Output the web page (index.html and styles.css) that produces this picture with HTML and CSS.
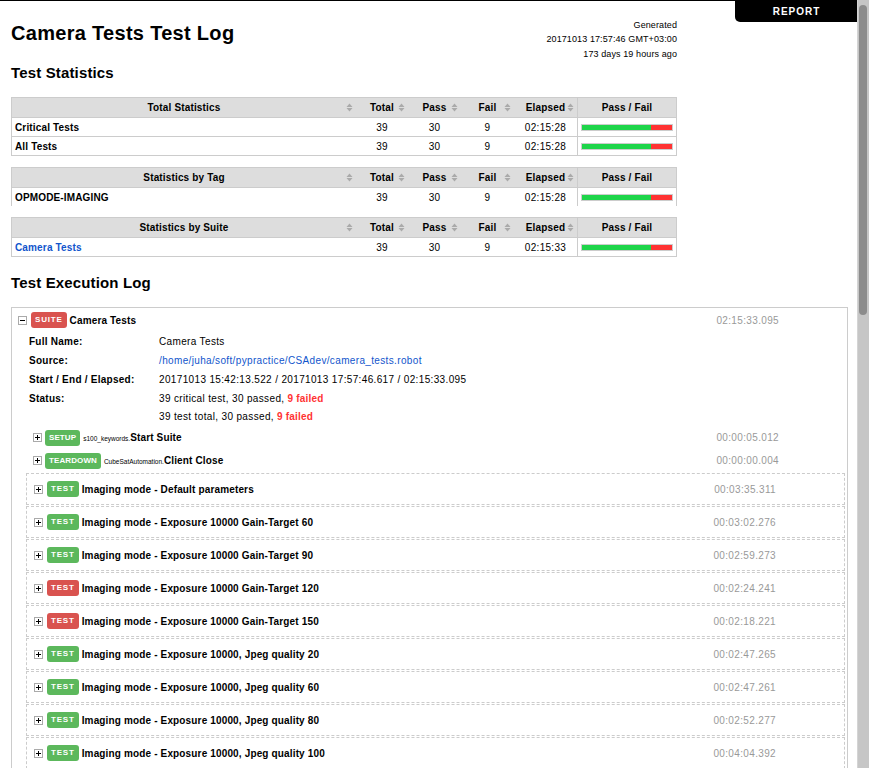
FILE: index.html
```html
<!DOCTYPE html>
<html lang="en">
<head>
<meta charset="utf-8">
<title>Camera Tests Test Log</title>
<link rel="stylesheet" href="styles.css">
</head>
<body>
<a class="report-link" href="#">REPORT</a>
<div class="scrollbar"><div class="thumb"></div></div>

<div class="header">
  <h1>Camera Tests Test Log</h1>
  <div class="generated">Generated<br>20171013 17:57:46 GMT+03:00<br>173 days 19 hours ago</div>
</div>

<h2>Test Statistics</h2>

<table class="stats">
  <colgroup><col class="c-name"><col class="c-total"><col class="c-pass"><col class="c-fail"><col class="c-elapsed"><col class="c-graph"></colgroup>
  <thead>
    <tr>
      <th>Total Statistics<svg class="sort" width="7" height="9" viewBox="0 0 7 9"><path d="M0.5 4L3.5 0.5L6.5 4Z M0.5 5L3.5 8.5L6.5 5Z"/></svg></th>
      <th>Total<svg class="sort" width="7" height="9" viewBox="0 0 7 9"><path d="M0.5 4L3.5 0.5L6.5 4Z M0.5 5L3.5 8.5L6.5 5Z"/></svg></th>
      <th>Pass<svg class="sort" width="7" height="9" viewBox="0 0 7 9"><path d="M0.5 4L3.5 0.5L6.5 4Z M0.5 5L3.5 8.5L6.5 5Z"/></svg></th>
      <th>Fail<svg class="sort" width="7" height="9" viewBox="0 0 7 9"><path d="M0.5 4L3.5 0.5L6.5 4Z M0.5 5L3.5 8.5L6.5 5Z"/></svg></th>
      <th>Elapsed<svg class="sort" width="7" height="9" viewBox="0 0 7 9"><path d="M0.5 4L3.5 0.5L6.5 4Z M0.5 5L3.5 8.5L6.5 5Z"/></svg></th>
      <th class="graph-col">Pass / Fail</th>
    </tr>
  </thead>
  <tbody>
    <tr>
      <td class="name">Critical Tests</td><td>39</td><td>30</td><td>9</td><td>02:15:28</td>
      <td class="graph-col"><div class="graph"><div class="pass-bar" style="width:76.92%"></div><div class="fail-bar" style="width:23.08%"></div></div></td>
    </tr>
    <tr>
      <td class="name">All Tests</td><td>39</td><td>30</td><td>9</td><td>02:15:28</td>
      <td class="graph-col"><div class="graph"><div class="pass-bar" style="width:76.92%"></div><div class="fail-bar" style="width:23.08%"></div></div></td>
    </tr>
  </tbody>
</table>

<table class="stats no-bottom">
  <colgroup><col class="c-name"><col class="c-total"><col class="c-pass"><col class="c-fail"><col class="c-elapsed"><col class="c-graph"></colgroup>
  <thead>
    <tr>
      <th>Statistics by Tag<svg class="sort" width="7" height="9" viewBox="0 0 7 9"><path d="M0.5 4L3.5 0.5L6.5 4Z M0.5 5L3.5 8.5L6.5 5Z"/></svg></th>
      <th>Total<svg class="sort" width="7" height="9" viewBox="0 0 7 9"><path d="M0.5 4L3.5 0.5L6.5 4Z M0.5 5L3.5 8.5L6.5 5Z"/></svg></th>
      <th>Pass<svg class="sort" width="7" height="9" viewBox="0 0 7 9"><path d="M0.5 4L3.5 0.5L6.5 4Z M0.5 5L3.5 8.5L6.5 5Z"/></svg></th>
      <th>Fail<svg class="sort" width="7" height="9" viewBox="0 0 7 9"><path d="M0.5 4L3.5 0.5L6.5 4Z M0.5 5L3.5 8.5L6.5 5Z"/></svg></th>
      <th>Elapsed<svg class="sort" width="7" height="9" viewBox="0 0 7 9"><path d="M0.5 4L3.5 0.5L6.5 4Z M0.5 5L3.5 8.5L6.5 5Z"/></svg></th>
      <th class="graph-col">Pass / Fail</th>
    </tr>
  </thead>
  <tbody>
    <tr>
      <td class="name">OPMODE-IMAGING</td><td>39</td><td>30</td><td>9</td><td>02:15:28</td>
      <td class="graph-col"><div class="graph"><div class="pass-bar" style="width:76.92%"></div><div class="fail-bar" style="width:23.08%"></div></div></td>
    </tr>
  </tbody>
</table>

<table class="stats">
  <colgroup><col class="c-name"><col class="c-total"><col class="c-pass"><col class="c-fail"><col class="c-elapsed"><col class="c-graph"></colgroup>
  <thead>
    <tr>
      <th>Statistics by Suite<svg class="sort" width="7" height="9" viewBox="0 0 7 9"><path d="M0.5 4L3.5 0.5L6.5 4Z M0.5 5L3.5 8.5L6.5 5Z"/></svg></th>
      <th>Total<svg class="sort" width="7" height="9" viewBox="0 0 7 9"><path d="M0.5 4L3.5 0.5L6.5 4Z M0.5 5L3.5 8.5L6.5 5Z"/></svg></th>
      <th>Pass<svg class="sort" width="7" height="9" viewBox="0 0 7 9"><path d="M0.5 4L3.5 0.5L6.5 4Z M0.5 5L3.5 8.5L6.5 5Z"/></svg></th>
      <th>Fail<svg class="sort" width="7" height="9" viewBox="0 0 7 9"><path d="M0.5 4L3.5 0.5L6.5 4Z M0.5 5L3.5 8.5L6.5 5Z"/></svg></th>
      <th>Elapsed<svg class="sort" width="7" height="9" viewBox="0 0 7 9"><path d="M0.5 4L3.5 0.5L6.5 4Z M0.5 5L3.5 8.5L6.5 5Z"/></svg></th>
      <th class="graph-col">Pass / Fail</th>
    </tr>
  </thead>
  <tbody>
    <tr>
      <td class="name"><a href="#">Camera Tests</a></td><td>39</td><td>30</td><td>9</td><td>02:15:33</td>
      <td class="graph-col"><div class="graph"><div class="pass-bar" style="width:76.92%"></div><div class="fail-bar" style="width:23.08%"></div></div></td>
    </tr>
  </tbody>
</table>

<h2 class="log-title">Test Execution Log</h2>

<div class="suite">
  <div class="el-header suite-header">
    <svg class="toggle" width="9" height="9" viewBox="0 0 9 9"><rect x="0.5" y="0.5" width="8" height="8"/><path d="M2 4.5H7"/></svg>
    <span class="label fail">SUITE</span>
    <span class="el-name">Camera Tests</span>
    <span class="elapsed">02:15:33.095</span>
  </div>
  <table class="metadata">
    <tr><th>Full Name:</th><td>Camera Tests</td></tr>
    <tr><th>Source:</th><td><a href="#">/home/juha/soft/pypractice/CSAdev/camera_tests.robot</a></td></tr>
    <tr><th>Start / End / Elapsed:</th><td>20171013 15:42:13.522 / 20171013 17:57:46.617 / 02:15:33.095</td></tr>
    <tr><th>Status:</th><td><div>39 critical test, 30 passed, <b class="failed">9 failed</b></div><div class="second">39 test total, 30 passed, <b class="failed">9 failed</b></div></td></tr>
  </table>

  <div class="children">
    <div class="el-header kw-header">
      <svg class="toggle" width="9" height="9" viewBox="0 0 9 9"><rect x="0.5" y="0.5" width="8" height="8"/><path d="M2 4.5H7M4.5 2V7"/></svg>
      <span class="label pass kw">SETUP</span>
      <span class="el-name"><span class="lib">s100_keywords.</span>Start Suite</span>
      <span class="elapsed">00:00:05.012</span>
    </div>
    <div class="el-header kw-header">
      <svg class="toggle" width="9" height="9" viewBox="0 0 9 9"><rect x="0.5" y="0.5" width="8" height="8"/><path d="M2 4.5H7M4.5 2V7"/></svg>
      <span class="label pass kw">TEARDOWN</span>
      <span class="el-name"><span class="lib">CubeSatAutomation.</span>Client Close</span>
      <span class="elapsed">00:00:00.004</span>
    </div>

    <div class="test"><div class="el-header test-header">
      <svg class="toggle" width="9" height="9" viewBox="0 0 9 9"><rect x="0.5" y="0.5" width="8" height="8"/><path d="M2 4.5H7M4.5 2V7"/></svg>
      <span class="label pass">TEST</span>
      <span class="el-name">Imaging mode - Default parameters</span>
      <span class="elapsed">00:03:35.311</span>
    </div></div>
    <div class="test"><div class="el-header test-header">
      <svg class="toggle" width="9" height="9" viewBox="0 0 9 9"><rect x="0.5" y="0.5" width="8" height="8"/><path d="M2 4.5H7M4.5 2V7"/></svg>
      <span class="label pass">TEST</span>
      <span class="el-name">Imaging mode - Exposure 10000 Gain-Target 60</span>
      <span class="elapsed">00:03:02.276</span>
    </div></div>
    <div class="test"><div class="el-header test-header">
      <svg class="toggle" width="9" height="9" viewBox="0 0 9 9"><rect x="0.5" y="0.5" width="8" height="8"/><path d="M2 4.5H7M4.5 2V7"/></svg>
      <span class="label pass">TEST</span>
      <span class="el-name">Imaging mode - Exposure 10000 Gain-Target 90</span>
      <span class="elapsed">00:02:59.273</span>
    </div></div>
    <div class="test"><div class="el-header test-header">
      <svg class="toggle" width="9" height="9" viewBox="0 0 9 9"><rect x="0.5" y="0.5" width="8" height="8"/><path d="M2 4.5H7M4.5 2V7"/></svg>
      <span class="label fail">TEST</span>
      <span class="el-name">Imaging mode - Exposure 10000 Gain-Target 120</span>
      <span class="elapsed">00:02:24.241</span>
    </div></div>
    <div class="test"><div class="el-header test-header">
      <svg class="toggle" width="9" height="9" viewBox="0 0 9 9"><rect x="0.5" y="0.5" width="8" height="8"/><path d="M2 4.5H7M4.5 2V7"/></svg>
      <span class="label fail">TEST</span>
      <span class="el-name">Imaging mode - Exposure 10000 Gain-Target 150</span>
      <span class="elapsed">00:02:18.221</span>
    </div></div>
    <div class="test"><div class="el-header test-header">
      <svg class="toggle" width="9" height="9" viewBox="0 0 9 9"><rect x="0.5" y="0.5" width="8" height="8"/><path d="M2 4.5H7M4.5 2V7"/></svg>
      <span class="label pass">TEST</span>
      <span class="el-name">Imaging mode - Exposure 10000, Jpeg quality 20</span>
      <span class="elapsed">00:02:47.265</span>
    </div></div>
    <div class="test"><div class="el-header test-header">
      <svg class="toggle" width="9" height="9" viewBox="0 0 9 9"><rect x="0.5" y="0.5" width="8" height="8"/><path d="M2 4.5H7M4.5 2V7"/></svg>
      <span class="label pass">TEST</span>
      <span class="el-name">Imaging mode - Exposure 10000, Jpeg quality 60</span>
      <span class="elapsed">00:02:47.261</span>
    </div></div>
    <div class="test"><div class="el-header test-header">
      <svg class="toggle" width="9" height="9" viewBox="0 0 9 9"><rect x="0.5" y="0.5" width="8" height="8"/><path d="M2 4.5H7M4.5 2V7"/></svg>
      <span class="label pass">TEST</span>
      <span class="el-name">Imaging mode - Exposure 10000, Jpeg quality 80</span>
      <span class="elapsed">00:02:52.277</span>
    </div></div>
    <div class="test"><div class="el-header test-header">
      <svg class="toggle" width="9" height="9" viewBox="0 0 9 9"><rect x="0.5" y="0.5" width="8" height="8"/><path d="M2 4.5H7M4.5 2V7"/></svg>
      <span class="label pass">TEST</span>
      <span class="el-name">Imaging mode - Exposure 10000, Jpeg quality 100</span>
      <span class="elapsed">00:04:04.392</span>
    </div></div>
  </div>
</div>
</body>
</html>
```

FILE: styles.css
```css
* {
  box-sizing: border-box;
}

body {
  margin: 0;
  padding: 0 21px 0 11px;
  border-top: 1px solid #000;
  font-family: "Liberation Sans", Arial, sans-serif;
  font-size: 10px;
  letter-spacing: 0.15px;
  color: #000;
  background: #fff;
}

a {
  color: #15c;
  text-decoration: none;
}

/* page scrollbar (browser chrome drawn over the right edge) */
.scrollbar {
  position: fixed;
  top: 0;
  right: 0;
  bottom: 0;
  width: 12px;
  background: #c6c6c6;
  border-left: 1px solid #d4d4d4;
  z-index: 20;
}
.thumb {
  margin: 5px 2px 0 1px;
  height: 310px;
  background: #8c8c8c;
  border-radius: 4px;
}

.report-link {
  position: fixed;
  top: 0;
  right: 12px;
  z-index: 10;
  width: 122px;
  padding: 6px 0 4px 1px;
  line-height: 12px;
  background: #000;
  color: #fff;
  font-weight: bold;
  letter-spacing: 1px;
  text-align: center;
  border-bottom-left-radius: 5px;
}

.header {
  display: flex;
  justify-content: space-between;
  align-items: flex-start;
  width: 666px;
  height: 47px;
  padding-top: 17px;
}

h1 {
  margin: 4px 0 0;
  font-size: 20px;
  line-height: 23px;
  font-weight: bold;
  letter-spacing: 0.3px;
}

.generated {
  font-size: 9px;
  line-height: 14.4px;
  letter-spacing: 0.1px;
  text-align: right;
  white-space: nowrap;
}

h2 {
  margin: 16px 0 16px;
  font-size: 15px;
  line-height: 17px;
  font-weight: bold;
}

h2.log-title {
  margin: 17px 0 16px;
}

/* statistics tables */
.stats {
  width: 666px;
  table-layout: fixed;
  border-collapse: separate;
  border-spacing: 0;
  border: 1px solid #ccc;
  margin-bottom: 11px;
}
.stats.no-bottom {
  border-bottom: none;
}
.c-name { width: 344px; }
.c-total { width: 52px; }
.c-pass { width: 53px; }
.c-fail { width: 53px; }
.c-elapsed { width: 63px; }
.c-graph { width: 99px; }

.stats th {
  position: relative;
  box-sizing: content-box;
  height: 19px;
  padding: 0;
  background: #ddd;
  font-weight: bold;
  text-align: center;
  white-space: nowrap;
}
.stats td {
  box-sizing: content-box;
  height: 18px;
  padding: 0;
  text-align: center;
  border-top: 1px solid #ccc;
  white-space: nowrap;
  letter-spacing: 0.3px;
}
.stats td.name {
  text-align: left;
  padding-left: 3px;
  font-weight: bold;
  letter-spacing: 0.15px;
}
.stats .graph-col {
  border-left: 1px solid #ccc;
}
.sort {
  position: absolute;
  right: 3px;
  top: 5px;
  fill: #aaa;
}

.graph {
  display: flex;
  width: 92px;
  height: 7px;
  margin-left: 3px;
  border: 1px solid #ccc;
}
.pass-bar {
  background: #1ed54a;
}
.fail-bar {
  background: #f33;
}

/* execution log */
.suite {
  border: 1px solid #ccc;
  padding: 0 2px 0 0;
}

.el-header {
  display: flex;
  align-items: center;
  white-space: nowrap;
}
.suite-header {
  height: 24px;
  padding: 0 66px 0 6px;
}
.kw-header {
  height: 23px;
  padding: 0 66px 0 7px;
}
.test {
  margin-top: 1px;
  border: 1px dashed #ccc;
}
.test-header {
  height: 30px;
  padding: 0 68px 0 7px;
}

.toggle {
  flex: none;
}
.toggle rect {
  fill: #fff;
  stroke: #aaa;
}
.toggle path {
  stroke: #000;
  stroke-width: 1;
}

.label {
  display: inline-block;
  padding: 2px 4px;
  line-height: 12px;
  font-size: 8px;
  font-weight: bold;
  letter-spacing: 0.8px;
  color: #fff;
  border-radius: 3px;
}
.label.pass {
  background: #5cb85c;
}
.label.fail {
  background: #d9534f;
}
.label.kw {
  letter-spacing: 0.1px;
}
.suite-header .label {
  margin-left: 4px;
}
.kw-header .label {
  margin-left: 3px;
}
.test-header .label {
  margin-left: 4px;
}

.el-name {
  margin-left: 3px;
  font-weight: bold;
}
.lib {
  font-size: 6.5px;
  font-weight: normal;
  letter-spacing: 0;
}
.elapsed {
  margin-left: auto;
  color: #999;
  letter-spacing: 0.35px;
}

.metadata {
  border-collapse: separate;
  border-spacing: 0;
  margin-left: 17px;
}
.metadata th {
  width: 130px;
  padding: 2px 0;
  line-height: 15px;
  text-align: left;
  vertical-align: top;
  font-weight: bold;
  letter-spacing: 0.25px;
  white-space: nowrap;
}
.metadata td {
  padding: 2px 0;
  line-height: 15px;
  vertical-align: top;
  letter-spacing: 0.35px;
}
.metadata .second {
  margin-top: 3px;
}
.failed {
  color: #f33;
  letter-spacing: 0.2px;
}

.children {
  margin-left: 14px;
}
```
